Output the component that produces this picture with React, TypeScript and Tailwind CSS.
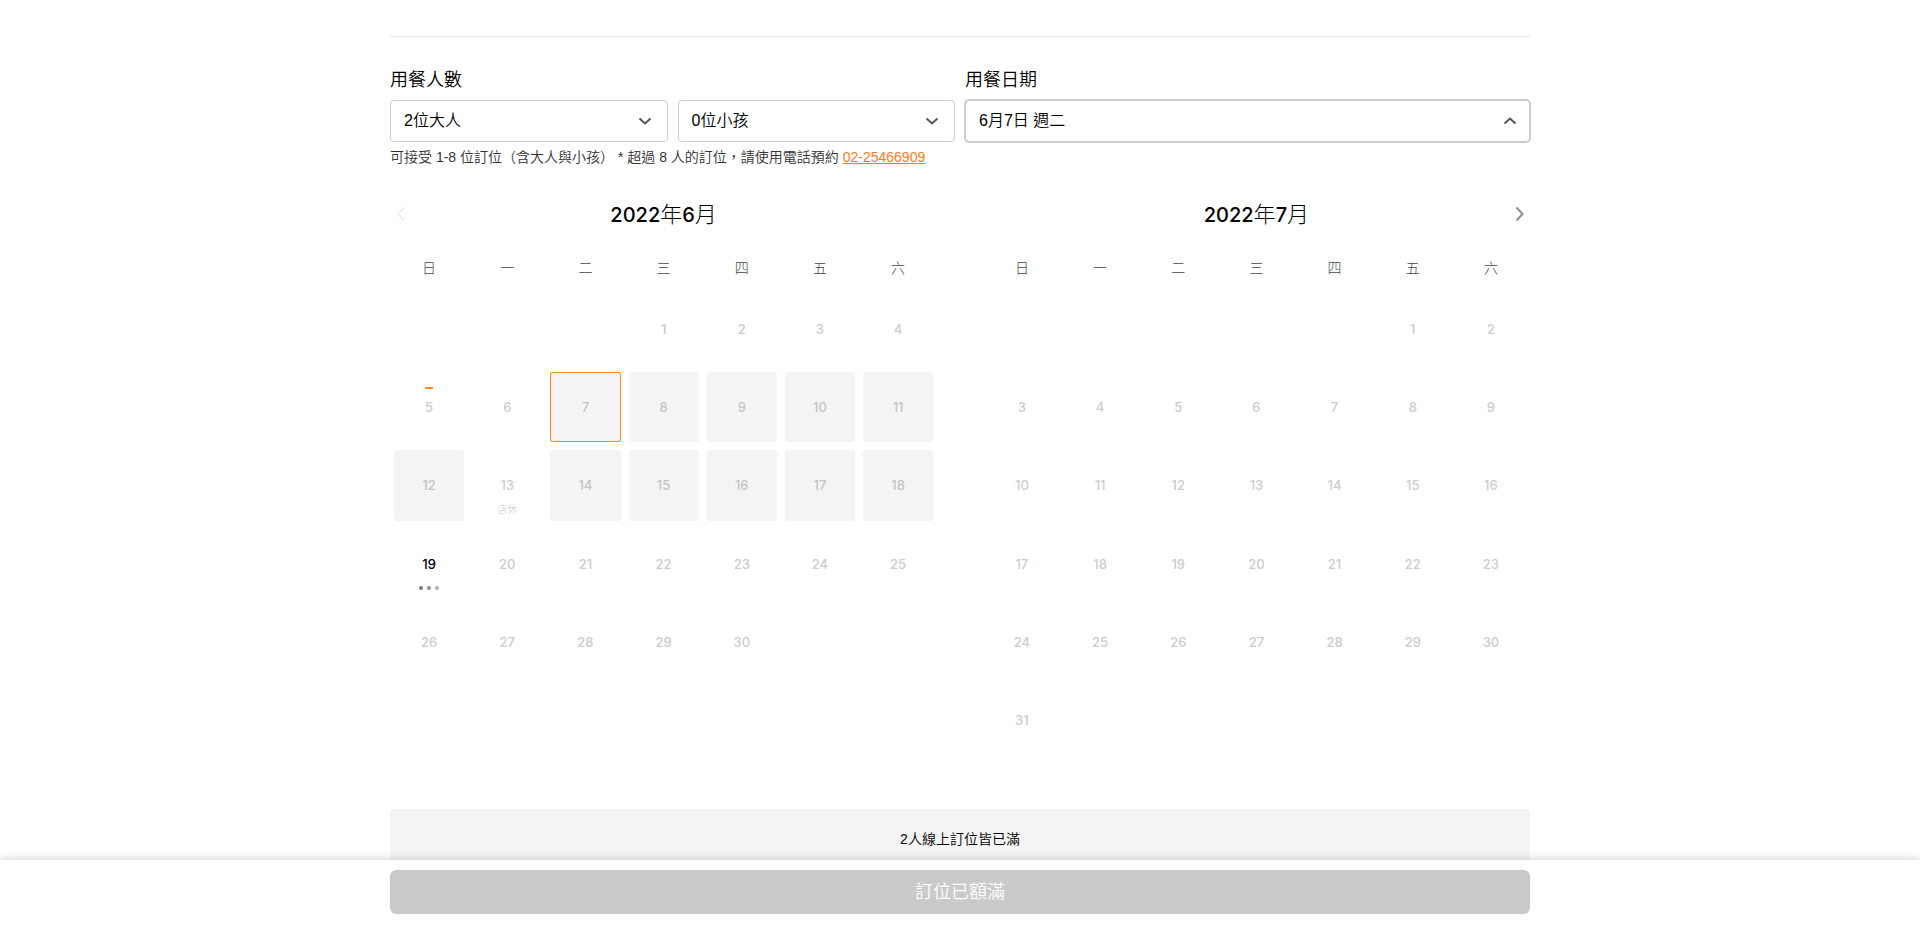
import React, { useState } from "react";

type DayStatus = "off" | "full" | "selected" | "closed" | "open";

interface MonthProps {
  year: number;
  month: number;
  offset: number;
  days: number;
  today?: number;
  status?: (day: number) => DayStatus;
  onPrev?: () => void;
  onNext?: () => void;
}

const WEEKDAYS = ["日", "一", "二", "三", "四", "五", "六"];

const dayStyles: Record<DayStatus, string> = {
  off: "text-[#cccccc]",
  closed: "text-[#cccccc]",
  full: "bg-[#f4f4f4] text-[#c4c4c4]",
  selected: "bg-[#f4f4f4] text-[#c4c4c4] ring-1 ring-inset ring-[#ff8a15]",
  open: "text-black",
};

function juneStatus(day: number): DayStatus {
  if (day === 7) return "selected";
  if (day === 13) return "closed";
  if (day === 19) return "open";
  return day >= 8 && day <= 18 ? "full" : "off";
}

function Chevron({ d, className }: { d: string; className: string }) {
  return (
    <svg viewBox="0 0 22 22" className={className} fill="none" stroke="currentColor" strokeWidth="2" aria-hidden="true">
      <path d={d} />
    </svg>
  );
}

function Month({ year, month, offset, days, today, status = () => "off", onPrev, onNext }: MonthProps) {
  return (
    <section className="w-[48%]">
      <header className="flex h-8 items-center">
        <div className="flex w-[22px]">
          {onPrev && (
            <button type="button" disabled aria-label="上個月" onClick={onPrev} className="text-[#efefef]">
              <Chevron d="M14 4.5 L8 11 L14 17.5" className="size-[22px]" />
            </button>
          )}
        </div>
        <h2 className="flex-1 text-center font-['Inter','Noto_Sans_CJK_TC',sans-serif] text-[22px] leading-8 font-light text-black">
          <span className="text-xl font-medium">{year}</span>年<span className="text-xl font-medium">{month}</span>月
        </h2>
        <div className="flex w-[22px]">
          {onNext && (
            <button type="button" aria-label="下個月" onClick={onNext} className="text-[#8f8f8f]">
              <Chevron d="M8.5 4.5 L14.5 11 L8.5 17.5" className="size-[22px]" />
            </button>
          )}
        </div>
      </header>
      <div className="mt-7 grid grid-cols-7 text-center text-sm leading-5 font-light text-[#444444]">
        {WEEKDAYS.map((w) => (
          <span key={w}>{w}</span>
        ))}
      </div>
      <div className="mt-3 grid grid-cols-7">
        {Array.from({ length: 42 }, (_, i) => {
          const day = i - offset + 1;
          if (day < 1 || day > days) return <div key={i} className="aspect-square" />;
          const s = status(day);
          return (
            <div key={i} className="aspect-square p-1">
              <button
                type="button"
                disabled={s !== "open"}
                className={`grid size-full grid-rows-[1fr_20px_1fr] justify-items-center rounded-[3px] font-['Inter','Noto_Sans_CJK_TC',sans-serif] text-[13px] leading-5 font-medium ${dayStyles[s]}`}
              >
                <span className="flex items-end pb-2">
                  {day === today && <span className="h-0.5 w-2 bg-[#ff8a15]" />}
                </span>
                <span>{day}</span>
                {s === "closed" && <span className="pt-2 text-[10px] leading-3 font-light">店休</span>}
                {s === "open" && (
                  <span className="flex gap-1 pt-3">
                    <span className="size-1 rounded-full bg-[#777777]" />
                    <span className="size-1 rounded-full bg-[#8f8f8f]" />
                    <span className="size-1 rounded-full bg-[#b0b0b0]" />
                  </span>
                )}
              </button>
            </div>
          );
        })}
      </div>
    </section>
  );
}

interface PartySelectProps {
  label: string;
  unit: string;
  from: number;
  value: number;
  onChange: (n: number) => void;
}

function PartySelect({ label, unit, from, value, onChange }: PartySelectProps) {
  return (
    <div className="grid flex-1 items-center">
      <select
        aria-label={label}
        value={value}
        onChange={(e) => onChange(Number(e.target.value))}
        className="col-start-1 row-start-1 h-[42px] w-full appearance-none rounded border border-[#cccccc] bg-white px-[13px] text-base text-black"
      >
        {Array.from({ length: 9 - from }, (_, i) => (
          <option key={i} value={i + from}>
            {i + from}
            {unit}
          </option>
        ))}
      </select>
      <Chevron
        d="M5.5 8.5 L11 13.5 L16.5 8.5"
        className="pointer-events-none col-start-1 row-start-1 mr-3 size-[22px] justify-self-end text-[#555555]"
      />
    </div>
  );
}

export default function App() {
  const [adults, setAdults] = useState(2);
  const [kids, setKids] = useState(0);
  const noop = () => {};

  return (
    <div className="min-h-screen bg-white pb-16 font-['Liberation_Sans','Noto_Sans_CJK_TC',sans-serif] font-[350]">
      <main className="mx-auto max-w-[1140px] pt-9">
        <hr className="border-[#e6e6e6]" />
        <div className="mt-[31px] flex gap-2.5">
          <fieldset className="min-w-0 flex-1">
            <legend className="text-lg leading-6 text-black">用餐人數</legend>
            <div className="mt-2 flex gap-2.5">
              <PartySelect label="大人" unit="位大人" from={1} value={adults} onChange={setAdults} />
              <PartySelect label="小孩" unit="位小孩" from={0} value={kids} onChange={setKids} />
            </div>
          </fieldset>
          <div className="min-w-0 flex-1">
            <label htmlFor="date" className="block text-lg leading-6 text-black">
              用餐日期
            </label>
            <button
              id="date"
              type="button"
              aria-expanded="true"
              className="mt-2 flex h-[42px] w-full items-center justify-between rounded border border-[#cccccc] bg-white pr-2 pl-[13px] text-base text-black ring-1 ring-[#cccccc]"
            >
              <span>6月7日 週二</span>
              <Chevron d="M5.5 13.5 L11 8.5 L16.5 13.5" className="size-[22px] text-[#555555]" />
            </button>
          </div>
        </div>
        <p className="mt-[5px] text-sm leading-5 text-[#333333]">
          可接受 1-8 位訂位（含大人與小孩） * 超過 8 人的訂位，請使用電話預約{" "}
          <a href="tel:02-25466909" className="text-[#ff7a1a] underline">
            02-25466909
          </a>
        </p>
        <div className="mt-[31px] flex justify-between">
          <Month year={2022} month={6} offset={3} days={30} today={5} status={juneStatus} onPrev={noop} />
          <Month year={2022} month={7} offset={5} days={31} onNext={noop} />
        </div>
        <div className="mt-[50px] rounded bg-[#f4f4f4] py-5 text-center text-sm leading-5 text-black">
          2人線上訂位皆已滿
        </div>
      </main>
      <footer className="fixed inset-x-0 bottom-0 bg-white pt-2.5 pb-[11px] shadow-[0_0_10px_rgba(0,0,0,0.2)]">
        <div className="mx-auto max-w-[1140px]">
          <button type="button" disabled className="block h-11 w-full rounded-md bg-[#cacaca] text-lg text-white">
            訂位已額滿
          </button>
        </div>
      </footer>
    </div>
  );
}
